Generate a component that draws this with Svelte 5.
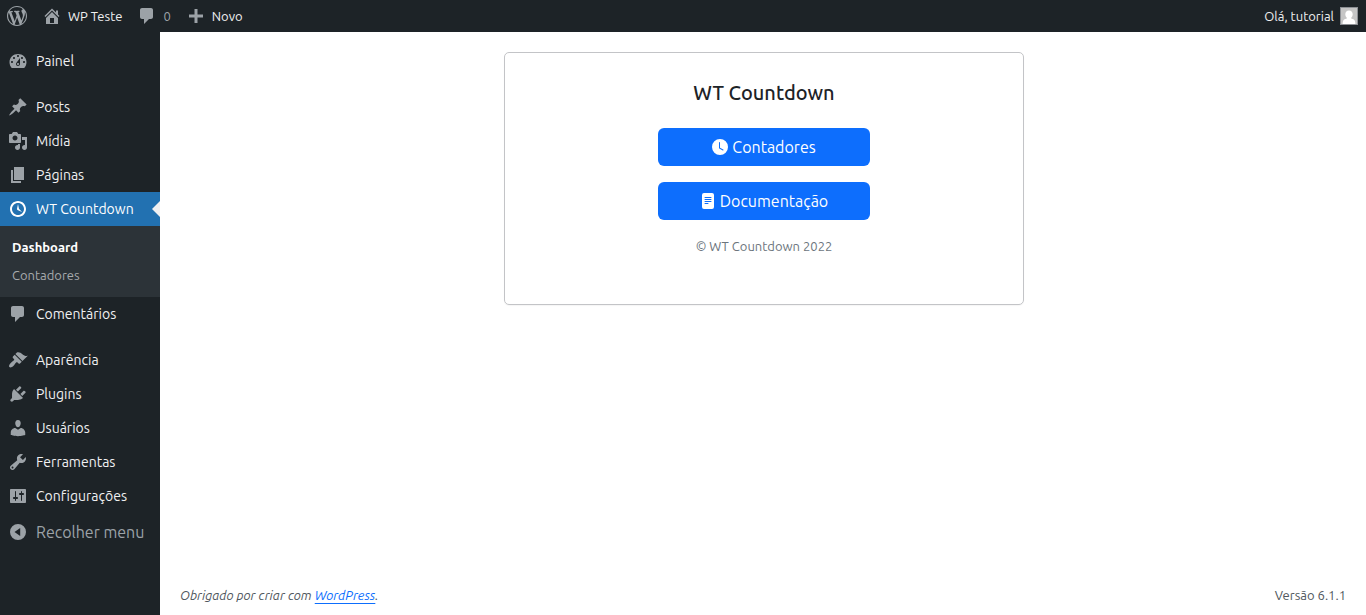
<script>
  const icons = {
    wordpress: 'M20 10c0-5.51-4.49-10-10-10C4.48 0 0 4.49 0 10c0 5.52 4.48 10 10 10 5.51 0 10-4.48 10-10zM7.78 15.37L4.37 6.22c.55-.02 1.17-.08 1.17-.08.5-.06.44-1.13-.06-1.11 0 0-1.45.11-2.37.11-.18 0-.37 0-.58-.01C4.12 2.69 6.87 1.11 10 1.11c2.33 0 4.45.87 6.05 2.34-.68-.11-1.65.39-1.65 1.58 0 .74.45 1.36.9 2.1.35.61.55 1.36.55 2.46 0 1.49-1.4 5-1.4 5l-3.03-8.37c.54-.02.82-.17.82-.17.5-.05.44-1.25-.06-1.22 0 0-1.44.12-2.38.12-.87 0-2.33-.12-2.33-.12-.5-.03-.56 1.2-.06 1.22l.92.08 1.26 3.41zM17.41 10c.24-.64.74-1.87.43-4.25.7 1.29 1.05 2.71 1.05 4.25 0 3.29-1.73 6.24-4.4 7.78.97-2.59 1.94-5.2 2.92-7.78zM6.1 18.09C3.12 16.65 1.11 13.53 1.11 10c0-1.3.23-2.48.72-3.59C3.25 10.3 4.67 14.2 6.1 18.09zm4.03-6.63l2.58 6.98c-.86.29-1.76.45-2.71.45-.79 0-1.57-.11-2.29-.33.81-2.38 1.62-4.74 2.42-7.1z',
    home: 'M16 8.5l1.53 1.53-1.06 1.06L10 4.6l-6.47 6.49-1.06-1.06L10 2.5l4 4v-2h2v4zm-6-2.46l6 5.99V18H4v-5.97zM12 17v-5H8v5h4z',
    comments: 'M5 2h9c1.1 0 2 .9 2 2v7c0 1.1-.9 2-2 2h-2l-5 5v-5H5c-1.1 0-2-.9-2-2V4c0-1.1.9-2 2-2z',
    plus: 'M17 8.500v3h-5.500v5.500h-3v-5.500H3v-3h5.500V3h3v5.500z',
    dashboard: 'M3.76 17h12.48c1.34-1.56 2.26-3.59 2.26-5.79 0-4.76-3.8-8.21-8.5-8.21s-8.5 3.45-8.5 8.21c0 2.2.92 4.23 2.26 5.79zM10 4c.55 0 1 .45 1 1s-.45 1-1 1-1-.45-1-1 .45-1 1-1zM6 6c.55 0 1 .45 1 1s-.45 1-1 1-1-.45-1-1 .45-1 1-1zM14 6c.55 0 1 .45 1 1s-.45 1-1 1-1-.45-1-1 .45-1 1-1zM8.63 11.55L12 7v6c0 1.1-.9 2-2 2s-2-.9-2-2c0-.57.24-1.08.63-1.45zM4 10c.55 0 1 .45 1 1s-.45 1-1 1-1-.45-1-1 .45-1 1-1zM16 10c.55 0 1 .45 1 1s-.45 1-1 1-1-.45-1-1 .45-1 1-1zM11 13c0-.55-.45-1-1-1s-1 .45-1 1 .45 1 1 1 1-.45 1-1z',
    post: 'M10.44 3.02l1.82-1.82 6.36 6.35-1.83 1.82c-1.05-.68-2.48-.57-3.41.36l-.75.75c-.92.93-1.04 2.35-.35 3.41l-1.83 1.82-2.41-2.41-2.8 2.79c-.42.42-3.38 2.71-3.8 2.29s1.86-3.39 2.28-3.81l2.79-2.79L4.1 9.36l1.83-1.82c1.05.69 2.48.57 3.4-.36l.75-.75c.93-.92 1.05-2.35.36-3.41z',
    media: 'M13 11V4c0-.55-.45-1-1-1h-1.67L9 1H5L3.67 3H2c-.55 0-1 .45-1 1v7c0 .55.45 1 1 1h10c.55 0 1-.45 1-1zM7 4.5c1.38 0 2.5 1.12 2.5 2.5S8.38 9.5 7 9.5 4.5 8.38 4.5 7 5.62 4.5 7 4.5zM14 6h5v10.5c0 1.38-1.12 2.5-2.5 2.5S14 17.88 14 16.5s1.12-2.5 2.5-2.5c.17 0 .34.02.5.05V9h-3V6zm-4 8.05V13h2v3.5c0 1.38-1.12 2.5-2.5 2.5S7 17.88 7 16.5 8.12 14 9.5 14c.17 0 .34.02.5.05z',
    page: 'M6 15V2h10v13H6zm-1 1h8v2H3V5h2v11z',
    clock: 'M10 2c4.42 0 8 3.58 8 8s-3.58 8-8 8-8-3.58-8-8 3.58-8 8-8zm0 14c3.31 0 6-2.69 6-6s-2.69-6-6-6-6 2.69-6 6 2.69 6 6 6zm-.71-5.29c.07.05.14.1.23.15l-.02.02L14 13l-3.03-3.19L10 5l-.97 4.81h.01c0 .02-.01.05-.02.09S9 9.97 9 10c0 .28.1.52.29.71z',
    appearance: 'M14.48 11.06L7.41 3.99l1.5-1.5c.5-.56 2.3-.47 3.51.32 1.21.8 1.43 1.28 2.91 2.1 1.18.64 2.45 1.26 4.45.85zm-.71.71L6.7 4.7 4.93 6.47c-.39.39-.39 1.02 0 1.41l1.06 1.06c.39.39.39 1.03 0 1.42-.6.6-1.43 1.11-2.21 1.69-.35.26-.7.53-1.01.84C1.43 14.23.4 16.08 1.4 17.07c.99 1 2.84-.03 4.18-1.36.31-.31.58-.66.85-1.02.57-.78 1.08-1.61 1.69-2.21.39-.39 1.02-.39 1.41 0l1.06 1.06c.39.39 1.02.39 1.41 0z',
    plugins: 'M13.11 4.36L9.87 7.6 8 5.73l3.24-3.24c.35-.34 1.05-.2 1.56.32.52.51.66 1.21.31 1.55zm-8 1.77l.91-1.12 9.01 9.01-1.19.84c-.71.71-2.63 1.16-3.82 1.16H6.14L4.9 17.26c-.59.59-1.54.59-2.12 0-.59-.58-.59-1.53 0-2.12l1.24-1.24v-3.88c0-1.13.4-3.19 1.09-3.89zm7.26 3.97l3.24-3.24c.34-.35 1.04-.21 1.55.31.52.51.66 1.21.31 1.55l-3.24 3.25z',
    users: 'M10 9.25c-2.27 0-2.73-3.44-2.73-3.44C7 4.02 7.82 2 9.97 2c2.16 0 2.98 2.02 2.71 3.81 0 0-.41 3.44-2.68 3.44zm0 2.57L12.72 10c2.39 0 4.52 2.33 4.52 4.53v2.49s-3.65 1.13-7.24 1.13c-3.65 0-7.24-1.13-7.24-1.13v-2.49c0-2.25 1.94-4.48 4.47-4.48z',
    tools: 'M16.68 9.77c-1.34 1.34-3.3 1.67-4.95.99l-5.41 6.52c-.99.99-2.59.99-3.58 0s-.99-2.59 0-3.57l6.52-5.42c-.68-1.65-.35-3.61.99-4.95 1.28-1.28 3.12-1.62 4.72-1.06l-2.89 2.89 2.82 2.82 2.86-2.87c.53 1.58.18 3.39-1.08 4.65zM3.81 16.21c.4.39 1.04.39 1.43 0 .4-.4.4-1.04 0-1.43-.39-.4-1.03-.4-1.43 0-.39.39-.39 1.03 0 1.43z',
    settings: 'M18 16V4c0-.55-.45-1-1-1H3c-.55 0-1 .45-1 1v12c0 .55.45 1 1 1h14c.55 0 1-.45 1-1zM8 11h1c.55 0 1 .45 1 1s-.45 1-1 1H8v1.5c0 .28-.22.5-.5.5s-.5-.22-.5-.5V13H6c-.55 0-1-.45-1-1s.45-1 1-1h1V5.5c0-.28.22-.5.5-.5s.5.22.5.5V11zm5-2h-1c-.55 0-1-.45-1-1s.45-1 1-1h1V5.5c0-.28.22-.5.5-.5s.5.22.5.5V7h1c.55 0 1 .45 1 1s-.45 1-1 1h-1v5.5c0 .28-.22.5-.5.5s-.5-.22-.5-.5V9z',
    collapse: 'M10 2a8 8 0 1 0 0 16 8 8 0 0 0 0-16zM12.200 6v8L6.500 10z'
  };

  const groups = [
    [{ label: 'Painel', icon: 'dashboard' }],
    [
      { label: 'Posts', icon: 'post' },
      { label: 'Mídia', icon: 'media' },
      { label: 'Páginas', icon: 'page' },
      { label: 'WT Countdown', icon: 'clock', current: true, children: ['Dashboard', 'Contadores'] },
      { label: 'Comentários', icon: 'comments' }
    ],
    [
      { label: 'Aparência', icon: 'appearance' },
      { label: 'Plugins', icon: 'plugins' },
      { label: 'Usuários', icon: 'users' },
      { label: 'Ferramentas', icon: 'tools' },
      { label: 'Configurações', icon: 'settings' }
    ]
  ];
</script>

{#snippet icon(name)}
  <svg class="icon" viewBox="0 0 20 20" aria-hidden="true"><path fill-rule="evenodd" d={icons[name]} /></svg>
{/snippet}

<div class="page">
  <header class="bar">
    <a class="tool logo" href="#about" aria-label="WordPress">{@render icon('wordpress')}</a>
    <a class="tool" href="#site">{@render icon('home')}<span>WP Teste</span></a>
    <a class="tool" href="#comments">{@render icon('comments')}<span class="muted">0</span></a>
    <a class="tool" href="#new">{@render icon('plus')}<span>Novo</span></a>
    <a class="tool account" href="#profile">
      <span>Olá, tutorial</span>
      <svg class="avatar" viewBox="0 0 18 18" aria-hidden="true">
        <rect width="18" height="18" fill="#8c8f94" />
        <rect x="1" y="1" width="16" height="16" fill="#c5c5c5" />
        <path fill="#fff" d="M9 3.500c2.200 0 3.700 1.600 3.700 3.700 0 1.500-.6 2.700-1.500 3.500v.9c2.200.3 3.600 1.500 4 3.400l.2 2H2.600l.2-2c.4-1.900 1.800-3.100 4-3.400v-.9c-.9-.8-1.500-2-1.500-3.500C5.300 5.100 6.800 3.500 9 3.500z" />
      </svg>
    </a>
  </header>

  <div class="body">
    <nav class="menu" aria-label="Menu principal">
      {#each groups as group}
        <ul class="group">
          {#each group as item}
            <li>
              <a class="item" class:current={item.current} href="#{item.icon}">
                {@render icon(item.icon)}<span>{item.label}</span>
              </a>
              {#if item.children}
                <ul class="sub">
                  {#each item.children as child, i}
                    <li><a class:active={i === 0} href="#{child}">{child}</a></li>
                  {/each}
                </ul>
              {/if}
            </li>
          {/each}
        </ul>
      {/each}
      <button class="collapse" type="button">{@render icon('collapse')}<span>Recolher menu</span></button>
    </nav>

    <div class="content">
      <main>
        <section class="card">
          <h1>WT Countdown</h1>
          <a class="btn" href="#contadores">
            <svg viewBox="0 0 16 16" aria-hidden="true"><path d="M16 8A8 8 0 1 1 0 8a8 8 0 0 1 16 0zM8 3.500a.5.5 0 0 0-1 0V9a.5.5 0 0 0 .252.434l3.500 2a.5.5 0 0 0 .496-.868L8 8.710V3.500z" /></svg>
            <span>Contadores</span>
          </a>
          <a class="btn" href="#documentacao">
            <svg viewBox="0 0 16 16" aria-hidden="true"><path d="M12 0H4a2 2 0 0 0-2 2v12a2 2 0 0 0 2 2h8a2 2 0 0 0 2-2V2a2 2 0 0 0-2-2zM5 4h6a.5.5 0 0 1 0 1H5a.5.5 0 0 1 0-1zm-.5 2.500A.5.5 0 0 1 5 6h6a.5.5 0 0 1 0 1H5a.5.5 0 0 1-.5-.5zM5 8h6a.5.5 0 0 1 0 1H5a.5.5 0 0 1 0-1zm0 2h3a.5.5 0 0 1 0 1H5a.5.5 0 0 1 0-1z" /></svg>
            <span>Documentação</span>
          </a>
          <p>© WT Countdown 2022</p>
        </section>
      </main>
      <footer>
        <em>Obrigado por criar com <a href="#wordpress">WordPress</a>.</em>
        <span>Versão 6.1.1</span>
      </footer>
    </div>
  </div>
</div>

<style>
  :global(body) { margin: 0; background: #fff; }
  .page {
    display: flex;
    flex-direction: column;
    min-height: 100vh;
    font-family: Ubuntu, "Noto Sans", sans-serif;
    font-variant-ligatures: none;
    font-size: 13px;
    color: #50575e;
  }
  a { color: inherit; text-decoration: none; }
  ul { list-style: none; margin: 0; padding: 0; }
  .icon { width: 20px; height: 20px; flex: none; fill: #9ca2a7; }

  .bar {
    display: flex;
    align-items: center;
    gap: 15px;
    height: 32px;
    padding: 0 8px 0 7px;
    background: #1d2327;
    color: #f0f0f1;
  }
  .tool { display: flex; align-items: center; gap: 6px; line-height: 32px; }
  .muted { color: #9ca2a7; }
  .account { margin-left: auto; }
  .avatar { width: 18px; height: 18px; }

  .body { display: flex; flex: 1; }
  .menu {
    flex: none;
    width: 160px;
    box-sizing: border-box;
    padding-top: 12px;
    background: #1d2327;
    color: #f0f0f1;
    font-size: 14px;
  }
  .group + .group { margin-top: 12px; }
  .item, .collapse {
    position: relative;
    display: flex;
    align-items: center;
    gap: 8px;
    height: 34px;
    padding: 0 8px;
    white-space: nowrap;
  }
  .item.current { background: #2271b1; color: #fff; }
  .item.current .icon { fill: #fff; }
  .item.current::after {
    content: "";
    position: absolute;
    right: 0;
    top: 9px;
    border: 8px solid transparent;
    border-left-width: 0;
    border-right-color: #f0f0f1;
  }
  .sub { padding: 7px 12px 8px; background: #2c3338; font-size: 13px; line-height: 28px; color: #a7aaad; }
  .active { color: #fff; font-weight: 600; }
  .collapse {
    width: 100%;
    margin-top: 2px;
    border: 0;
    background: none;
    color: #9ca2a7;
    font: inherit;
    font-size: 16px;
  }

  .content { display: flex; flex: 1; flex-direction: column; min-width: 0; }
  main { flex: 1; padding: 20px 18px 20px 20px; }
  .card {
    display: flex;
    flex-direction: column;
    align-items: center;
    gap: 16px;
    max-width: 520px;
    box-sizing: border-box;
    margin: 0 auto;
    padding: 28px 32px 48px;
    border: 1px solid #c3c4c7;
    border-radius: 5px;
    box-shadow: 0 1px 1px rgba(0, 0, 0, 0.04);
  }
  h1 { margin: 0 0 7px; font-size: 20px; font-weight: 500; line-height: 24px; color: #1d2327; }
  .btn {
    display: flex;
    align-items: center;
    justify-content: center;
    gap: 4px;
    width: 100%;
    max-width: 212px;
    height: 38px;
    border-radius: 6px;
    background: #0d6efd;
    color: #fff;
    font-size: 16px;
  }
  .btn svg { width: 16px; height: 16px; fill: #fff; }
  p { margin: 0; line-height: 20px; color: #6c757d; }
  footer { display: flex; justify-content: space-between; padding: 10px 20px; line-height: 20px; }
  footer a { color: #0d6efd; text-decoration: underline; text-decoration-skip-ink: none; text-underline-offset: 3px; }
</style>
